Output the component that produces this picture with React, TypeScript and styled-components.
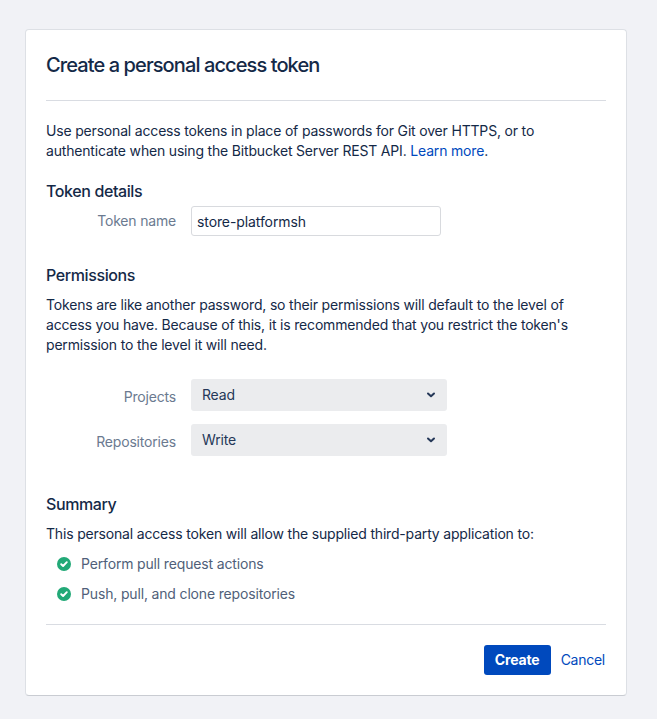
import React from "react";
import styled, { createGlobalStyle } from "styled-components";

const Global = createGlobalStyle`
  * { box-sizing: border-box; }
  body {
    margin: 0;
    background: #f1f2f6;
    color: #142947;
    font: 14px/20px Inter, sans-serif;
    letter-spacing: -0.18px;
    -webkit-font-smoothing: antialiased;
  }
  h1, h2, p, ul { margin: 0; padding: 0; }
`;
const Page = styled.main`padding: 29px 30px 23px 25px; height: 719px;`;
const Panel = styled.form`
  height: 667px;
  padding: 20px;
  background: #fff;
  border: 1px solid #dde0e5;
  border-radius: 4px;
  border-bottom-color: #c9ccd2;
`;
const Header = styled.header`
  height: 51px;
  padding-top: 3px;
  border-bottom: 1px solid #d9dce2;
`;
const Title = styled.h1`
  font-size: 20px;
  line-height: 24px;
  font-weight: 550;
  letter-spacing: -0.9px;
`;
const Heading = styled.h2<{ $top: number }>`
  margin-top: ${(p) => p.$top}px;
  font-size: 16px;
  line-height: 20px;
  font-weight: 500;
  letter-spacing: -0.39px;
`;
const Text = styled.p<{ $top: number }>`
  margin-top: ${(p) => p.$top}px;
  white-space: nowrap;
`;
const Link = styled.a`color: #0049bd; text-decoration: none;`;
const Field = styled.div<{ $top: number }>`
  display: grid;
  grid-template-columns: 130px 256px;
  column-gap: 15px;
  margin-top: ${(p) => p.$top}px;
`;
const Label = styled.label<{ $top: number }>`
  padding-top: ${(p) => p.$top}px;
  text-align: right;
  color: #6b7a90;
`;
const Input = styled.input`
  width: 250px;
  height: 30px;
  padding: 1px 5px 0;
  border: 1px solid #d8dade;
  border-radius: 3px;
  background: #fff;
  color: #142947;
  font: inherit;
  letter-spacing: -0.1px;
  outline: none;
`;
const Select = styled.button`
  display: flex;
  align-items: center;
  justify-content: space-between;
  height: 32px;
  padding: 0 11px;
  border: 0;
  border-radius: 3px;
  background: #ebecee;
  color: #253858;
  font: inherit;
  letter-spacing: -0.18px;
`;
const List = styled.ul`
  margin: 10px 0 0 11px;
  display: grid;
  gap: 10px;
  list-style: none;
`;
const Item = styled.li`
  display: flex;
  align-items: center;
  gap: 10px;
  height: 20px;
  color: #505f79;
  letter-spacing: -0.16px;
`;
const Footer = styled.footer`
  display: flex;
  justify-content: flex-end;
  align-items: center;
  gap: 10px;
  margin-top: 20px;
  padding: 20px 1px 0 0;
  border-top: 1px solid #d9dce2;
  letter-spacing: -0.26px;
`;
const Submit = styled.button`
  width: 67px;
  height: 30px;
  padding: 0;
  border: 0;
  border-radius: 3px;
  background: #0049bd;
  color: #fff;
  font: 700 14px/20px Inter, sans-serif;
  letter-spacing: -0.15px;
`;

const Chevron = () => (
  <svg width="10" height="8" viewBox="0 0 10 8" fill="none">
    <path d="M2 2.5 5 5.3 8 2.5" stroke="#253858" strokeWidth="2" strokeLinecap="round" strokeLinejoin="round" />
  </svg>
);
const Tick = () => (
  <svg width="14" height="14" viewBox="0 0 14 14" fill="none">
    <circle cx="7" cy="7" r="7" fill="#22a977" />
    <path d="m4.2 7.2 1.9 1.8L9.8 5.2" stroke="#fff" strokeWidth="1.9" strokeLinecap="round" strokeLinejoin="round" />
  </svg>
);

export default function App() {
  return (
    <Page>
      <Global />
      <Panel>
        <Header><Title>Create a personal access token</Title></Header>
        <Text $top={20}>
          Use personal access tokens in place of passwords for Git over HTTPS, or to<br />
          authenticate when using the Bitbucket Server REST API. <Link>Learn more</Link>.
        </Text>
        <Heading $top={20}>Token details</Heading>
        <Field $top={5}>
          <Label $top={5} htmlFor="token">Token name</Label>
          <Input id="token" defaultValue="store-platformsh" />
        </Field>
        <Heading $top={29}>Permissions</Heading>
        <Text $top={10}>
          Tokens are like another password, so their permissions will default to the level of<br />
          access you have. Because of this, it is recommended that you restrict the token's<br />
          permission to the level it will need.
        </Text>
        <Field $top={24}>
          <Label $top={8}>Projects</Label>
          <Select type="button">Read<Chevron /></Select>
        </Field>
        <Field $top={13}>
          <Label $top={8}>Repositories</Label>
          <Select type="button">Write<Chevron /></Select>
        </Field>
        <Heading $top={38}>Summary</Heading>
        <Text $top={10}>This personal access token will allow the supplied third-party application to:</Text>
        <List>
          <Item><Tick />Perform pull request actions</Item>
          <Item><Tick />Push, pull, and clone repositories</Item>
        </List>
        <Footer>
          <Submit type="button">Create</Submit>
          <Link>Cancel</Link>
        </Footer>
      </Panel>
    </Page>
  );
}
